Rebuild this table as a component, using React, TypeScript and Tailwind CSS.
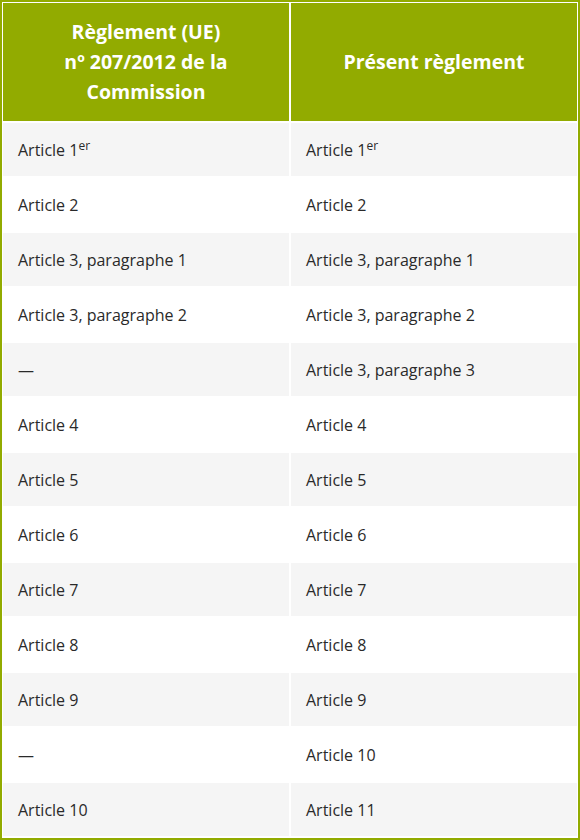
import React from "react";

const rows: [React.ReactNode, React.ReactNode][] = [
  [<>Article 1<sup>er</sup></>, <>Article 1<sup>er</sup></>],
  ["Article 2", "Article 2"],
  ["Article 3, paragraphe 1", "Article 3, paragraphe 1"],
  ["Article 3, paragraphe 2", "Article 3, paragraphe 2"],
  ["—", "Article 3, paragraphe 3"],
  ["Article 4", "Article 4"],
  ["Article 5", "Article 5"],
  ["Article 6", "Article 6"],
  ["Article 7", "Article 7"],
  ["Article 8", "Article 8"],
  ["Article 9", "Article 9"],
  ["—", "Article 10"],
  ["Article 10", "Article 11"],
];

export default function App() {
  return (
    <div
      className="w-[580px] h-[840px] bg-white"
      style={{ fontFamily: '"Open Sans", "Noto Sans", sans-serif' }}
    >
      <div className="border-2 border-[#92ab00] p-px pb-[2px] bg-white grid grid-cols-2 gap-[2px]">
        <div className="h-[118px] bg-[#92ab00] flex items-center justify-center text-center text-white font-bold text-[19.5px] leading-[30px] px-4">
          <div>
            Règlement (UE)
            <br />
            nº 207/2012 de la
            <br />
            Commission
          </div>
        </div>
        <div className="h-[118px] bg-[#92ab00] flex items-center justify-center text-center text-white font-bold text-[19.5px] leading-[30px] px-4">
          Présent règlement
        </div>
        {rows.map((r, i) => (
          <React.Fragment key={i}>
            <div
              className={`h-[53px] flex items-center pl-[15px] text-[16px] text-[#2a2a2a] ${
                i % 2 === 0 ? "bg-[#f5f5f5]" : "bg-white"
              }`}
            >
              <span>{r[0]}</span>
            </div>
            <div
              className={`h-[53px] flex items-center pl-[15px] text-[16px] text-[#2a2a2a] ${
                i % 2 === 0 ? "bg-[#f5f5f5]" : "bg-white"
              }`}
            >
              <span>{r[1]}</span>
            </div>
          </React.Fragment>
        ))}
      </div>
    </div>
  );
}
